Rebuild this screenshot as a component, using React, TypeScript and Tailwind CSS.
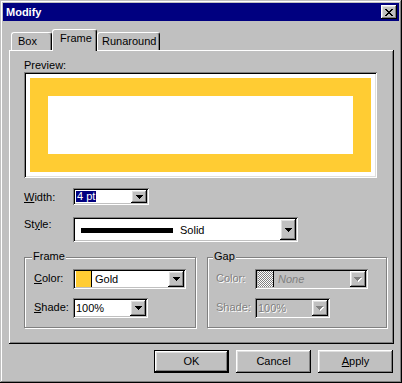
import React from "react";

const raised =
  "shadow-[inset_-1px_-1px_#000,inset_1px_1px_#fff,inset_-2px_-2px_#808080,inset_2px_2px_#dfdfdf]";
const sunken =
  "shadow-[inset_1px_1px_#808080,inset_-1px_-1px_#fff,inset_2px_2px_#000,inset_-2px_-2px_#c0c0c0]";
const emboss = "text-[#808080] [text-shadow:1px_1px_0_#fff]";

function Arrow({ disabled }: { disabled?: boolean }) {
  if (disabled) {
    return (
      <svg width="8" height="5" viewBox="0 0 8 5" shapeRendering="crispEdges">
        <path d="M1 1h7v1H1zM2 2h5v1H2zM3 3h3v1H3zM4 4h1v1H4z" fill="#fff" />
        <path d="M0 0h7v1H0zM1 1h5v1H1zM2 2h3v1H2zM3 3h1v1H3z" fill="#808080" />
      </svg>
    );
  }
  return (
    <svg width="7" height="4" viewBox="0 0 7 4" shapeRendering="crispEdges">
      <path d="M0 0h7v1H0zM1 1h5v1H1zM2 2h3v1H2zM3 3h1v1H3z" fill="#000" />
    </svg>
  );
}

function DropBtn({ disabled }: { disabled?: boolean }) {
  return (
    <div className={`w-[16px] h-full shrink-0 flex items-center justify-center bg-[#c0c0c0] ${raised}`}>
      <Arrow disabled={disabled} />
    </div>
  );
}

function Combo({
  w,
  h,
  disabled,
  children,
}: {
  w: string;
  h: string;
  disabled?: boolean;
  children: React.ReactNode;
}) {
  return (
    <div className={`${w} ${h} p-[2px] flex ${disabled ? "bg-[#c0c0c0]" : "bg-white"} ${sunken}`}>
      <div className="flex-1 flex items-center min-w-0 overflow-hidden">{children}</div>
      <DropBtn disabled={disabled} />
    </div>
  );
}

function Tab({
  w,
  pl,
  selected,
  children,
}: {
  w: string;
  pl: string;
  selected?: boolean;
  children: React.ReactNode;
}) {
  return (
    <div
      className={`${w} ${pl} ${
        selected ? "h-[22px] mb-[-1px] relative z-10" : "h-[18px]"
      } pt-[2px] bg-[#c0c0c0] border-l border-t border-white border-r border-r-black rounded-t-[3px] shadow-[inset_-1px_0_#808080] whitespace-nowrap`}
    >
      {children}
    </div>
  );
}

function Group({
  w,
  label,
  lx,
  disabled,
  children,
}: {
  w: string;
  label: string;
  lx: string;
  disabled?: boolean;
  children: React.ReactNode;
}) {
  return (
    <div
      className={`${w} h-[71px] relative border border-[#808080] shadow-[1px_1px_0_#fff,inset_1px_1px_0_#fff] pt-[11px]`}
    >
      <span className={`absolute top-[-8px] ${lx} px-[1px] bg-[#c0c0c0] leading-[13px]`}>{label}</span>
      {children}
    </div>
  );
}

export default function App() {
  return (
    <div
      className="w-[402px] h-[383px] bg-[#c0c0c0] p-[3px] flex flex-col text-[11px] leading-[13px] text-black font-['Liberation_Sans',Arial,sans-serif] shadow-[inset_-1px_-1px_#000,inset_1px_1px_#c0c0c0,inset_-2px_-2px_#808080,inset_2px_2px_#fff]"
    >
      {/* Title bar */}
      <div className="h-[18px] bg-[#000080] flex items-center justify-between shrink-0">
        <span className="pl-[3px] text-white font-bold">Modify</span>
        <div className={`w-[16px] h-[14px] mr-[2px] bg-[#c0c0c0] flex items-center justify-center ${raised}`}>
          <svg width="8" height="7" viewBox="0 0 8 7" shapeRendering="crispEdges">
            <path
              d="M0 0h2v1H0zM6 0h2v1H6zM1 1h2v1H1zM5 1h2v1H5zM2 2h4v1H2zM3 3h2v1H3zM2 4h4v1H2zM1 5h2v1H1zM5 5h2v1H5zM0 6h2v1H0zM6 6h2v1H6z"
              fill="#000"
            />
          </svg>
        </div>
      </div>

      {/* Tabs */}
      <div className="mt-[8px] ml-[8px] h-[21px] flex items-end shrink-0">
        <Tab w="w-[41px]" pl="pl-[6px]">Box</Tab>
        <Tab w="w-[45px]" pl="pl-[7px]" selected>
          Frame
        </Tab>
        <Tab w="w-[63px]" pl="pl-[4px]">Runaround</Tab>
      </div>

      {/* Panel */}
      <div
        className="ml-[6px] w-[385px] h-[294px] shrink-0 pt-[9px] pl-[15px] flex flex-col shadow-[inset_-1px_-1px_#000,inset_1px_1px_#fff,inset_-2px_-2px_#808080]"
      >
        <div>Preview:</div>
        <div className={`w-[353px] h-[106px] bg-white p-[6px] flex ${"shadow-[inset_1px_1px_#808080,inset_-1px_-1px_#fff,inset_2px_2px_#000,inset_-2px_-2px_#dfdfdf]"}`}>
          <div className="flex-1 bg-[#ffcc33] p-[18px] flex">
            <div className="flex-1 bg-white" />
          </div>
        </div>

        {/* Width */}
        <div className="mt-[10px] flex items-start">
          <div className="w-[49px] mt-[3px]">
            <span className="underline underline-offset-[1px]">W</span>idth:
          </div>
          <Combo w="w-[76px]" h="h-[17px]">
            <span className="ml-[1px] px-[1px] h-[11px] leading-[11px] bg-[#000080] text-white">4 pt</span>
          </Combo>
        </div>

        {/* Style */}
        <div className="mt-[12px] flex items-start">
          <div className="w-[49px] mt-[1px]">
            St<span className="underline underline-offset-[1px]">y</span>le:
          </div>
          <Combo w="w-[225px]" h="h-[25px]">
            <div className="flex items-center pt-[2px]">
              <div className="ml-[6px] w-[92px] h-[5px] bg-black" />
              <span className="ml-[7px]">Solid</span>
            </div>
          </Combo>
        </div>

        {/* Groups */}
        <div className="mt-[15px] flex gap-[11px]">
          <Group w="w-[172px]" label="Frame" lx="left-[7px]">
            <div className="pl-[9px] flex items-start">
              <div className="w-[39px] mt-[3px]">
                <span className="underline underline-offset-[1px]">C</span>olor:
              </div>
              <Combo w="w-[113px]" h="h-[20px]">
                <div className="ml-[1px] w-[16px] h-full bg-[#ffcc33] border-r border-black shrink-0" />
                <span className="ml-[3px]">Gold</span>
              </Combo>
            </div>
            <div className="mt-[9px] pl-[9px] flex items-start">
              <div className="w-[39px] mt-[3px]">
                <span className="underline underline-offset-[1px]">S</span>hade:
              </div>
              <Combo w="w-[75px]" h="h-[20px]">
                <span className="ml-[1px]">100%</span>
              </Combo>
            </div>
          </Group>

          <Group w="w-[180px]" label="Gap" lx="left-[5px]">
            <div className="pl-[8px] flex items-start">
              <div className={`w-[39px] mt-[3px] ${emboss}`}>Color:</div>
              <Combo w="w-[113px]" h="h-[20px]" disabled>
                <div className="ml-[1px] w-[16px] h-full border-r border-black shrink-0 bg-[image:repeating-conic-gradient(#808080_0_25%,#ffffff_0_50%)] bg-[size:2px_2px]" />
                <span className="ml-[4px] italic text-[#808080]">None</span>
              </Combo>
            </div>
            <div className="mt-[9px] pl-[8px] flex items-start">
              <div className={`w-[39px] mt-[3px] ${emboss}`}>Shade:</div>
              <Combo w="w-[75px]" h="h-[20px]" disabled>
                <span className={`ml-[1px] ${emboss}`}>100%</span>
              </Combo>
            </div>
          </Group>
        </div>
      </div>

      {/* Buttons */}
      <div className="mt-[6px] pr-[6px] flex justify-end gap-[7px]">
        <div className="w-[75px] h-[23px] border border-black flex">
          <div className={`flex-1 flex items-center justify-center ${raised}`}>OK</div>
        </div>
        <div className={`w-[75px] h-[23px] flex items-center justify-center ${raised}`}>Cancel</div>
        <div className={`w-[75px] h-[23px] flex items-center justify-center ${raised}`}>
          <span>
            <span className="underline underline-offset-[1px]">A</span>pply
          </span>
        </div>
      </div>
    </div>
  );
}
